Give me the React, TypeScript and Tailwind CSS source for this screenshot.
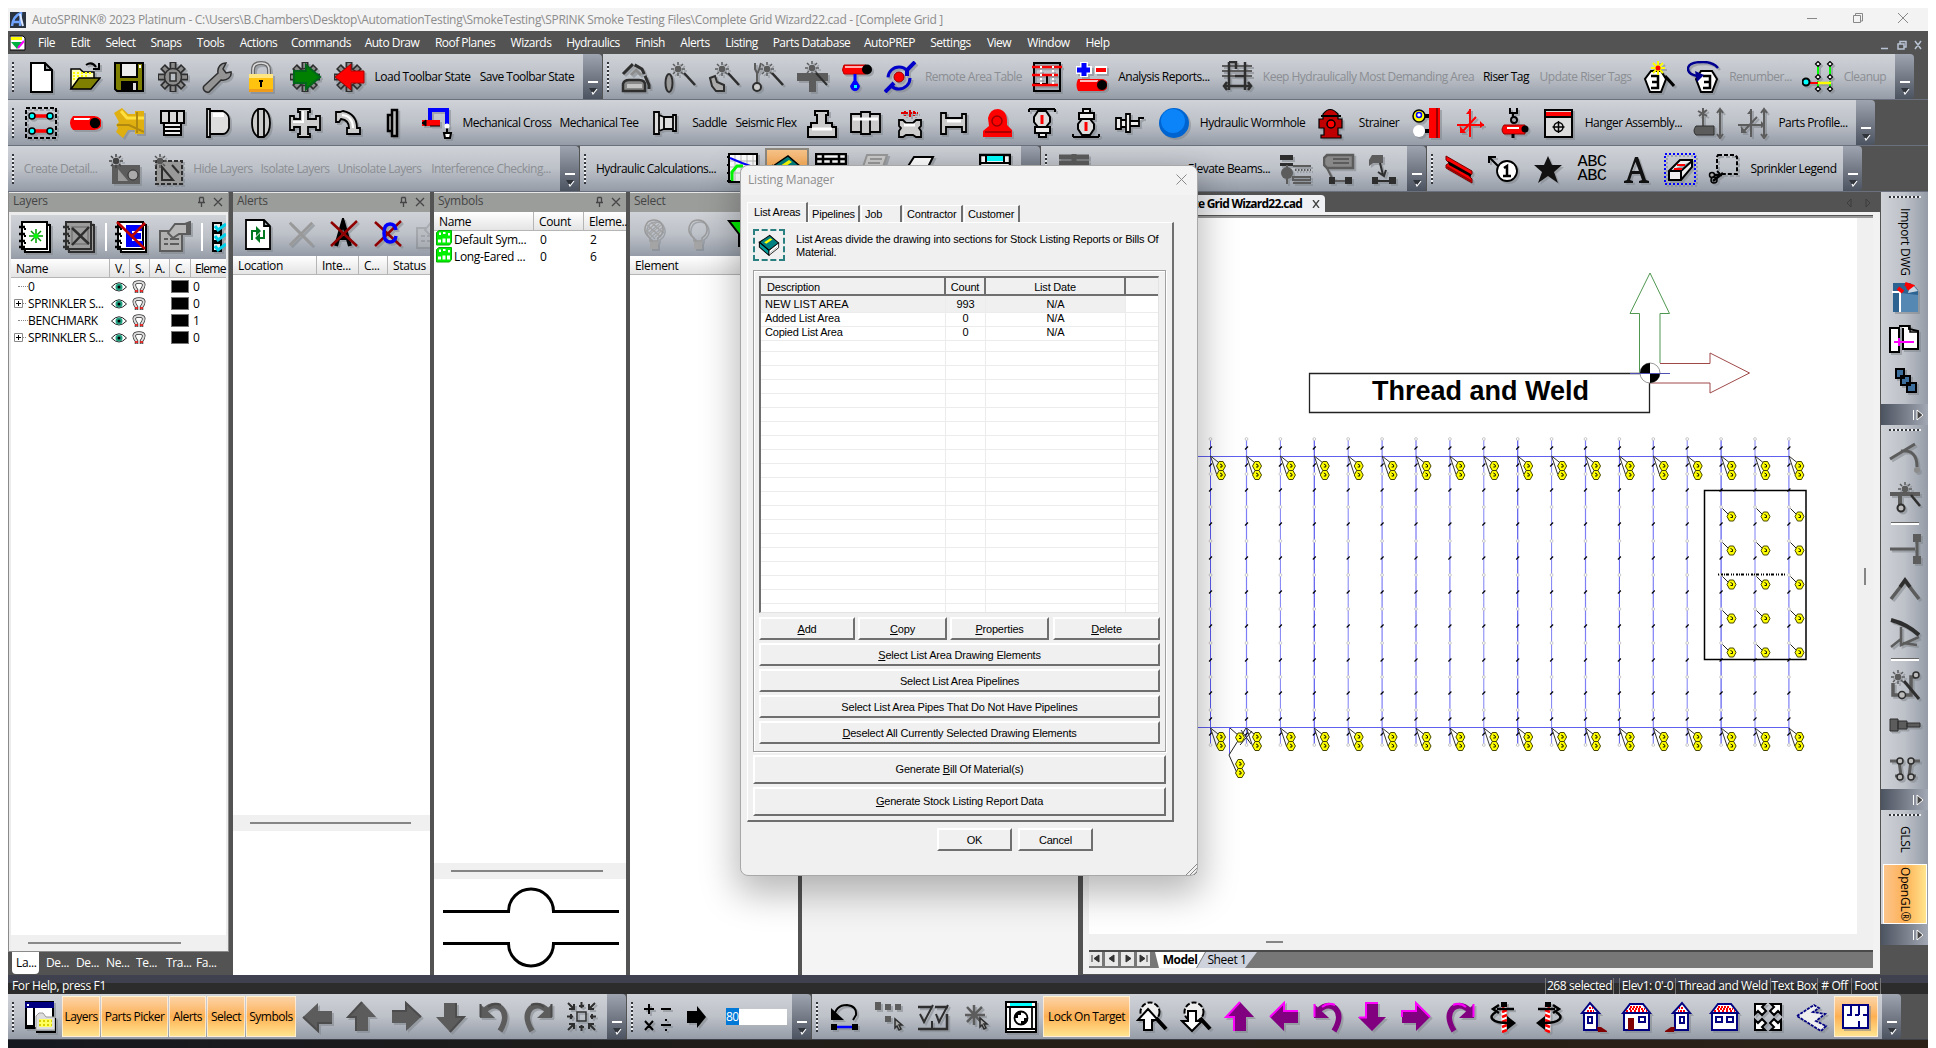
import React from "react";

const K = "#000";
const R = "#ff0000";
const G = "#5c5c5c";
const DG = "#2e2e2e";
const LG = "#8c8c8c";

/* Icon drawings on a 32x32 grid */
const gear = (
  <>
    <g stroke={DG} strokeWidth="7">
      <path d="M16 1v30M1 16h30M5.500 5.500l21 21M26.500 5.500l-21 21" strokeDasharray="none" />
    </g>
    <g stroke={LG} strokeWidth="3.500">
      <path d="M16 2v28M2 16h28M6.500 6.500l19 19M25.500 6.500l-19 19" />
    </g>
    <circle cx="16" cy="16" r="8.500" fill={LG} stroke={DG} strokeWidth="1.500" />
    <path d="M13 12h6v8h-6z" fill="#b9bdc4" stroke={DG} strokeWidth="1.500" />
  </>
);
const sun = (x: number, y: number, c = G) => (
  <g stroke={c} strokeWidth="1.500">
    <circle cx={x} cy={y} r="2.500" fill={c} />
    <path d={`M${x} ${y - 7}v3M${x} ${y + 4}v3M${x - 7} ${y}h3M${x + 4} ${y}h3M${x - 5} ${y - 5}l2 2M${x + 3} ${y + 3}l2 2M${x + 5} ${y - 5}l-2 2M${x - 3} ${y + 3}l-2 2`} />
  </g>
);
const wand = <path d="M20 12l11 12" stroke={DG} strokeWidth="2.500" />;
const arrowUp = (f: string, s: string) => (
  <>
    <path d="M16 1L30 16h-8v14H10V16H2z" fill={f} />
    <path d="M10 30V16H2L16 1" stroke={s} strokeWidth="2" />
  </>
);
const curl = (f: string, s: string) => (
  <>
    <path d="M6 10Q15 1 23 7Q31 15 22 30" stroke={f} strokeWidth="5.500" />
    <path d="M2 3v14h15z" fill={f} />
    <path d="M2.500 3v13M10 6Q16 1 23 4" stroke={s} strokeWidth="2" />
  </>
);
const house = (narrow: boolean, flip: boolean) => (
  <g transform={flip ? "matrix(-1 0 0 1 32 0)" : undefined}>
    {narrow ? (
      <>
        <path d="M8 12h13v17H8z" fill="#fff" stroke="#000080" strokeWidth="2" />
        <path d="M6 12L14 2l9 10z" fill="#fff" stroke="#000080" strokeWidth="2" />
        <path d="M11 10h7M13 7h4" stroke={R} strokeWidth="2" strokeDasharray="2 1" />
        <path d="M12 16h4v6h-4z" stroke="#000080" strokeWidth="2" />
        <path d="M21 26h4l6 4v1h-9z" fill="#800000" />
      </>
    ) : (
      <>
        <path d="M4 12h25v17H4z" fill="#fff" stroke="#000080" strokeWidth="2" />
        <path d="M3 12L10 3h13l7 9z" fill="#fff" stroke="#000080" strokeWidth="2" />
        <path d="M6 10h21" stroke={R} strokeWidth="2" strokeDasharray="2 2" />
        <path d="M9 8h16M10 6h12" stroke={R} strokeWidth="2" strokeDasharray="2 1" />
        <path d="M19 16h6v5h-6z" stroke="#000080" strokeWidth="2" />
      </>
    )}
  </g>
);
const spiral = (
  <>
    <path d="M16 1v30" stroke="#fff" strokeWidth="5" />
    <path d="M14 6l5-2M14 11l5-2M14 16l5-2M14 21l5-2M14 26l5-2M14 31l5-2" stroke={R} strokeWidth="2.500" />
    <path d="M13 1h6v5h-6z" fill={K} />
    <path d="M9 8h17M11 4l-6 4 6 4" stroke={K} strokeWidth="2.500" />
    <path d="M8 11c-9 5-4 11 12 11" stroke={K} strokeWidth="2.500" />
    <path d="M19 15v14l9-7z" fill={K} />
  </>
);
const book = (
  <>
    <path d="M2 12L17 2l13 11-14 11z" fill="#008080" stroke={K} strokeWidth="1.500" />
    <path d="M2 12v7l14 12v-7z" fill="#00a0a0" stroke={K} strokeWidth="1.500" />
    <path d="M16 24l14-11v7L16 31z" fill="#fff" stroke={K} strokeWidth="1.200" />
    <path d="M18 27l10-8" stroke="#999" />
    <path d="M9 12l9-6 3 2-9 6z" fill="#ffff00" />
  </>
);
const notebook = (f: string, s: string) => (
  <>
    <path d="M6 4h25v27H6z" fill={f} stroke={s} strokeWidth="2" />
    <path d="M3 1h25v27H3z" fill={f} stroke={s} strokeWidth="2" />
    <path d="M0 6h6M0 13h6M0 20h6M0 26h6" stroke={s} strokeWidth="2.500" />
    <path d="M5 8h2M5 15h2M5 22h2" stroke={s} strokeWidth="2" />
  </>
);
const propSheet = (
  <>
    <path d="M1 10h22v20H1z" fill="#b0b0b0" stroke={G} strokeWidth="2" />
    <path d="M5 18h4M11 18h9M5 23h4M11 23h9" stroke={G} strokeWidth="2" />
    <path d="M9 12l7-9h10l5-2v12H20l-6 4z" fill="#b8b8b8" stroke={G} strokeWidth="2" />
    <path d="M27 2h4v11h-4z" fill={G} />
  </>
);
const hand = (x: number, y: number, c: string) => (
  <path d={`M${x} ${y}v9l2-2 2 4 2-1-2-4h3z`} fill="#aaa" stroke={c} strokeWidth="1.500" />
);
const zoomArrow = (up: boolean) => (
  <>
    <circle cx="14" cy="11" r="9.500" fill="#eee" stroke={K} strokeWidth="2" strokeDasharray="5 2" />
    <path d="M20 17l10 11" stroke={K} strokeWidth="4" />
    {up ? (
      <path d="M12 8L22 19h-6v10H8V19H2z" fill="#fff" stroke={K} strokeWidth="2" />
    ) : (
      <path d="M12 30L22 20h-6V10H8v10H2z" fill="#fff" stroke={K} strokeWidth="2" />
    )}
  </>
);
const sprinkler = (
  <>
    <path d="M3 2h26M3 2v3M29 2v3" stroke={K} strokeWidth="2" />
    <path d="M12 4h8l4 6v5l-4 5h-8l-4-5v-5z" fill="#ddd" stroke={K} strokeWidth="2" />
    <path d="M16 8v9" stroke={R} strokeWidth="3" />
    <path d="M9 20h15v6H9zM13 26h7v4h-7z" fill="#eee" stroke={K} strokeWidth="2" />
  </>
);
const axes = (c: string) => (
  <>
    <path d="M15 2v28M2 18h27M8 24L21 10" stroke={c} strokeWidth="2" />
    <path d="M11 7l4-5v5zM25 14l4 4-4 3zM5 19v7h6z" fill={c} />
  </>
);

const ICONS: Record<string, React.ReactNode> = {
  newdoc: <path d="M6 2h14l7 7v22H6z M20 2v7h7" fill="#fff" stroke={K} strokeWidth="2" />,
  open: (
    <>
      <path d="M2 28V8h9l3 3h11v6" fill="#ffffc0" stroke={K} strokeWidth="1.500" />
      <path d="M4 12h18M4 15h16M4 18h8" stroke="#ffff00" strokeWidth="2" strokeDasharray="2 2" />
      <path d="M2 28l8-11h21l-9 11z" fill="#808000" stroke={K} strokeWidth="1.500" />
      <path d="M17 4q6-4 10 2M30 2v6h-6" stroke={K} strokeWidth="2" />
    </>
  ),
  save: (
    <>
      <path d="M2 2h28v28H4l-2-2z" fill="#808000" stroke={K} strokeWidth="2" />
      <path d="M8 2h16v14H8z" fill="#eee" stroke={K} strokeWidth="2" />
      <path d="M8 20h17v10H8z" fill={K} />
      <path d="M20 22h3v7h-3z" fill="#ddd" />
      <path d="M26 4h2v3h-2z" fill="#fff" />
    </>
  ),
  gear,
  wrench: (
    <path d="M3 25L17 12c-1-6 3-10 8-10l-3 6 3 4 5-1c1 5-4 9-10 8L8 31c-4 1-7-3-5-6z" fill="#949494" stroke={DG} strokeWidth="1.500" />
  ),
  lock: (
    <>
      <path d="M8 14V9q0-7 8-7t8 7v5" stroke="#666" strokeWidth="4" />
      <path d="M8 14V9q0-7 8-7t8 7v5" stroke="#ddd" strokeWidth="1.500" />
      <path d="M4 13h24v18H4z" fill="#ffc20e" />
      <path d="M4 13h24v4H4z" fill="#ffe680" />
      <path d="M4 28h24v3H4z" fill="#ef9c1c" />
      <path d="M16 19v7M14 20h4" stroke={K} strokeWidth="2" />
    </>
  ),
  gearGreen: (
    <>
      {gear}
      <path d="M5 10h12V4l14 12-14 12v-6H5z" fill="#008000" stroke="#00661a" strokeWidth="2" />
    </>
  ),
  gearRed: (
    <>
      {gear}
      <path d="M31 10H18V3L2 16l16 13v-7h13z" fill={R} stroke="#a00" />
    </>
  ),
  headset: (
    <>
      <path d="M3 13L13 3l9 5 7 16v5" stroke={DG} strokeWidth="3" strokeDasharray="14 2" />
      <path d="M11 14l5-5 5 5" stroke={LG} strokeWidth="3" />
      <path d="M3 30v-7q1-4 6-4h10q6 0 6 5v6z" fill="#888" stroke={DG} strokeWidth="2.500" />
      <path d="M7 25h15" stroke="#c4c4c4" strokeWidth="4" />
    </>
  ),
  wand1: (
    <>
      {sun(14, 8)}
      {wand}
      <ellipse cx="5" cy="22" rx="3.500" ry="9" fill="#999" stroke={DG} strokeWidth="2" />
    </>
  ),
  wand2: (
    <>
      {sun(14, 8)}
      {wand}
      <path d="M2 17l5-2 2 6 7 3v6H8l-4-5z" fill="#aaa" stroke={DG} strokeWidth="2" />
    </>
  ),
  wand3: (
    <>
      {sun(15, 8)}
      {wand}
      <path d="M3 2v6l2 4v10M9 2L6 12" stroke={G} strokeWidth="2" />
      <circle cx="5" cy="26" r="4" fill="#ccc" stroke={DG} strokeWidth="2" />
    </>
  ),
  wand4: (
    <>
      {sun(16, 7)}
      <path d="M1 12h31v8H20v11h-7V20H1z" fill={G} />
      <path d="M20 12l11 12" stroke={DG} strokeWidth="2" />
    </>
  ),
  drip: (
    <>
      <path d="M4 4h22v9H4q-3-4 0-9z" fill={R} stroke="#b00" />
      <path d="M5 6h18" stroke="#ffb0b0" strokeWidth="2" />
      <circle cx="27" cy="8.500" r="5" fill={K} />
      <path d="M15 13v6" stroke="#00f" strokeWidth="3" />
      <path d="M15 17l5 8q-1 5-5 5t-5-5z" fill="#00f" />
      <path d="M14 24h3v3h-3z" fill="#0ff" />
    </>
  ),
  swirl: (
    <>
      <circle cx="15" cy="17" r="11" stroke="#0000c8" strokeWidth="3" strokeDasharray="26 9" />
      <path d="M31 1l-8 8v6M1 31l9-9" stroke="#0000c8" strokeWidth="4" />
      <circle cx="15" cy="16" r="5" fill={R} stroke="#900" />
    </>
  ),
  gridRed: (
    <>
      <path d="M3 2h26v28H3z M3 14h13v9H3z" stroke={K} strokeWidth="2" />
      <path d="M1 6h30M1 14h26M1 24h26" stroke={R} strokeWidth="2.500" />
      <path d="M10 5v19M22 5v19" stroke="#fff" strokeWidth="2" strokeDasharray="2 2" />
    </>
  ),
  plusPipe: (
    <>
      <path d="M1 9h16M9 1v15" stroke="#fff" strokeWidth="8" />
      <path d="M2 9h13M9 2v13" stroke="#00f" strokeWidth="5" />
      <path d="M20 5h12v8H20z" fill="#fff" />
      <path d="M21 7h10v4H21z" fill={R} />
      <path d="M3 18h24v12H3q-3-6 0-12z" fill={R} />
      <path d="M5 20h18" stroke="#ffc0c0" strokeWidth="2" />
      <circle cx="27" cy="24" r="5.500" fill={K} stroke={R} />
    </>
  ),
  truss: (
    <>
      <path d="M1 5h30M1 10h30M1 15h30" stroke={G} strokeWidth="2" />
      <path d="M8 1v28M24 1v28M8 1h7v7M14 15h9M4 25h25M6 21l-3 4 3 4M27 21l3 4-3 4" stroke={DG} strokeWidth="2.500" />
    </>
  ),
  tag3a: (
    <>
      <path d="M8 10h10l5 8-5 13H7L2 18z" fill="#fff" stroke={K} strokeWidth="2" />
      <path d="M8 15h7v12H8M9 21h6" stroke={K} strokeWidth="2.500" />
      <g stroke="#ffff00" strokeWidth="2">
        <path d="M15 0v14M8 7h14M10 2l10 10M20 2L10 12" />
      </g>
      <circle cx="15" cy="7" r="2.500" fill={R} />
      <path d="M22 15l9 10" stroke={K} strokeWidth="3" />
    </>
  ),
  tag3b: (
    <>
      <path d="M14 10h11l5 8-5 13H14l-5-13z" fill="#fff" stroke={K} strokeWidth="2" />
      <path d="M16 15h7v12h-7M17 21h6" stroke={K} strokeWidth="2.500" />
      <path d="M31 7Q26 1 16 1 1 1 1 8q0 5 9 7" stroke="#000090" strokeWidth="2.500" />
      <path d="M8 10l9 4-7 7z" fill="#000090" />
    </>
  ),
  cleanup: (
    <>
      <path d="M16 4v10M28 4v10M16 20v7M28 20v7" stroke="#0f0" strokeWidth="2" />
      <path d="M16 22h13" stroke="#ff0" strokeWidth="2.500" />
      <path d="M6 22h10" stroke={R} strokeWidth="2" />
      <circle cx="4" cy="21" r="3.500" fill="#0ff" stroke={K} strokeWidth="2" />
      {[
        [16, 3],
        [28, 3],
        [16, 16],
        [28, 16],
        [16, 28],
        [28, 28],
      ].map(([x, y]) => (
        <path key={`${x}${y}`} d={`M${x - 2.5} ${y}l2.500-2.500 2.500 2.500-2.500 2.500z`} fill="#fff" stroke={K} strokeWidth="1.200" />
      ))}
    </>
  ),
  pipesDash: (
    <>
      <path d="M1 1h30v30H1z" stroke={K} strokeWidth="2" strokeDasharray="4 2" />
      <path d="M8 9h16M8 24h16" stroke={R} strokeWidth="3.500" />
      {[
        [7, 9],
        [25, 9],
        [7, 24],
        [25, 24],
      ].map(([x, y]) => (
        <circle key={`${x}${y}`} cx={x} cy={y} r="3" fill="#0ff" stroke={K} strokeWidth="1.500" />
      ))}
    </>
  ),
  pipeRed: (
    <>
      <path d="M4 9h22v14H4q-6-7 0-14z" fill={R} />
      <path d="M5 12h17" stroke="#fff" strokeWidth="2" />
      <circle cx="26" cy="16" r="6" fill={K} stroke={R} strokeWidth="1.500" />
    </>
  ),
  fitting: (
    <>
      <path d="M1 6l8-5 6 6h7V4h9v23h-9v-4h-7l-5 8-7-6 2-4-2-3 3-3z" fill="#e0b010" />
      <path d="M8 4l6 7h17" stroke="#ffe040" strokeWidth="3" />
      <path d="M4 18h12l15 7M24 5v21" stroke="#b08a10" strokeWidth="2" />
    </>
  ),
  plug: (
    <>
      <path d="M4 4h23v12H4z M12 4v12M20 4v12" fill="#d8d8d8" stroke={K} strokeWidth="2" />
      <path d="M7 16h17v12H7z M7 20h17M7 24h17" fill="#eee" stroke={K} strokeWidth="2" />
    </>
  ),
  cap: (
    <>
      <path d="M6 2h3v28H6z M9 4h13q6 3 6 8v9q-2 6-6 6H9" fill="#ddd" stroke={K} strokeWidth="1.800" />
      <path d="M12 8h11" stroke="#fff" strokeWidth="4" />
    </>
  ),
  coupling: (
    <>
      <path d="M13 2h6q6 4 6 14t-6 14h-6Q7 26 7 16T13 2z" fill="#ccc" stroke={K} strokeWidth="1.800" />
      <path d="M13 2v28M19 2v28" stroke={K} strokeWidth="1.800" />
    </>
  ),
  cross: (
    <>
      <path d="M9 2h12v3h-2v7h8V9h4v14h-4v-3h-8v7h2v3H9v-3h2v-7H5v3H1V9h4v3h6V5H9z" fill="#ccc" stroke={K} strokeWidth="1.800" />
      <path d="M14 4v11H4" stroke="#fff" strokeWidth="2" />
    </>
  ),
  elbow: (
    <>
      <path d="M3 5h4l3-1q14 3 14 17h3v6H14v-6h2q0-8-8-9l-2 3H3z" fill="#ccc" stroke={K} strokeWidth="1.800" />
      <path d="M9 8q11 1 11 13" stroke="#fff" strokeWidth="2" />
    </>
  ),
  flange: <path d="M15 3h5v26h-5zM15 8h-4v16h4" fill="#bbb" stroke={K} strokeWidth="2.500" />,
  hose: (
    <>
      <path d="M9 15V3h17v14" stroke="#00f" strokeWidth="4" />
      <path d="M1 16h18" stroke={R} strokeWidth="6" />
      <path d="M1 16l4-3v6zM9 19h10" fill={K} stroke={K} />
      <path d="M26 17v8M23 26h7l-1 5h-5z" fill="#fff" stroke={K} strokeWidth="2" />
      <circle cx="26" cy="19" r="2.500" fill="#fff" />
    </>
  ),
  outlet: (
    <>
      <path d="M5 5h5v22H5zM10 8l5 2v12l-5 2zM15 10h9v12h-9zM24 8h3v16h-3z" fill="#ddd" stroke={K} strokeWidth="1.800" />
    </>
  ),
  tee: (
    <>
      <path d="M2 20h3v-4h6V8H9V4h13v4h-2v8h6v4h4v10H2z" fill="#ccc" stroke={K} strokeWidth="2" />
      <path d="M6 22h20" stroke="#fff" strokeWidth="3" />
    </>
  ),
  union: (
    <>
      <path d="M1 7h10v18H1z M11 5h9v22h-9z M20 7h10v18H20z" fill="#ccc" stroke={K} strokeWidth="1.800" />
      <path d="M3 12h25" stroke="#fff" strokeWidth="3" />
    </>
  ),
  valveRed: (
    <>
      <path d="M7 6h17M16 3v8M11 4v5M20 4v5" stroke="#d00" strokeWidth="2" strokeDasharray="3 1" />
      <path d="M5 13h4l3 3h7l3-3h5v6l-2 2 2 3v6h-5l-3-2h-7l-3 2H5v-6l2-3-2-2z" fill="#ccc" stroke={K} strokeWidth="1.800" />
      <path d="M10 18h11" stroke="#fff" strokeWidth="3" />
    </>
  ),
  spool: (
    <>
      <path d="M3 6h5v5h16V7h4v18h-4v-5H8v7H3z" fill="#ccc" stroke={K} strokeWidth="1.800" />
      <path d="M9 14h14" stroke="#fff" strokeWidth="3" />
    </>
  ),
  pump: (
    <>
      <path d="M6 11Q8 2 16 2q10 1 9 16l5 5v7H1v-6l6-5z" fill={R} />
      <circle cx="15" cy="14" r="5" stroke="#900" strokeWidth="1.500" />
      <path d="M3 25h26" stroke="#a00" strokeWidth="2" />
    </>
  ),
  sprinkler,
  sprinklerUp: <g transform="matrix(1 0 0 -1 0 32)">{sprinkler}</g>,
  sidewall: (
    <path d="M2 11h5v11H2zM7 13h5v7H7zM12 7h4v18h-4zM16 14h9v5h-9M25 14V11h5" fill="#eee" stroke={K} strokeWidth="1.800" />
  ),
  sphere: (
    <>
      <circle cx="16" cy="16" r="15" fill="#0064d0" />
      <circle cx="15" cy="14" r="12" fill="#0a84f8" />
    </>
  ),
  hydrant: (
    <>
      <path d="M8 7q7-9 15 0v5h4v9h-4v7h3v3H6v-3h3v-7H4v-9h4z" fill="#c00000" stroke={K} strokeWidth="1.200" />
      <path d="M6 9h20" stroke={K} strokeWidth="2" />
      <circle cx="16" cy="17" r="4" fill={R} stroke={K} strokeWidth="1.500" />
    </>
  ),
  wallBulb: (
    <>
      <path d="M18 1h11v30H18z" fill={R} />
      <path d="M26 1v30" stroke="#900" strokeWidth="2" />
      <circle cx="8" cy="9" r="6" fill="#ff0" stroke={K} strokeWidth="1.500" />
      <circle cx="8" cy="8" r="2.500" fill="#fff" stroke="#00f" strokeWidth="1.500" />
      <circle cx="8" cy="24" r="6" fill="#fff" />
      <path d="M14 9h4M14 24h4" stroke={K} strokeWidth="4" />
    </>
  ),
  axesRed: axes(R),
  axesGray: (
    <>
      {axes(G)}
      <path d="M28 3v26M25 6l3-4 3 4M25 27l3 4 3-4" stroke={G} strokeWidth="2" />
    </>
  ),
  hangerRed: (
    <>
      <path d="M11 1v5h3v5M18 1v5h-3" stroke={K} strokeWidth="2" />
      <circle cx="15" cy="13" r="3" stroke={K} strokeWidth="2" />
      <path d="M5 18h21v9H5q-4-4 0-9z" fill={R} stroke="#900" />
      <path d="M8 21h12" stroke="#fff" strokeWidth="2" />
      <circle cx="26" cy="22" r="3.500" fill={K} />
      <path d="M14 27v4" stroke={K} strokeWidth="3" />
    </>
  ),
  hangerGray: (
    <>
      <path d="M11 1v18M6 4l9 5M15 3l-8 6" stroke={G} strokeWidth="2" />
      <path d="M4 19h18v9H4q-4-4 0-9z" fill={G} stroke={DG} />
      <path d="M28 3v26M25 6l3-4 3 4M25 27l3 4 3-4" stroke={G} strokeWidth="2" />
    </>
  ),
  target: (
    <>
      <path d="M2 3h27v27H2z" fill="#ddd" stroke={K} strokeWidth="2" />
      <path d="M3 5h25v4H3z" fill={R} />
      <path d="M3 10h25" stroke={K} strokeWidth="2" />
      <circle cx="15.500" cy="20" r="4.500" stroke={K} strokeWidth="1.500" />
      <path d="M15.500 14v12M9.500 20h12" stroke={K} strokeWidth="1.500" />
    </>
  ),
  detailA: (
    <>
      <path d="M4 12h28v19H4z" fill={G} />
      <path d="M10 16l10 12H10z" fill="#9a9a9a" />
      <circle cx="25" cy="22" r="5" fill="#aaa" stroke={DG} />
      {sun(8, 8, "#444")}
    </>
  ),
  detailB: (
    <>
      <path d="M4 8h26v23H4z" fill="#999" stroke={DG} strokeWidth="2" strokeDasharray="4 2" />
      <path d="M10 14l11 13H10zM20 12l7 8" stroke={DG} strokeWidth="2" />
      {sun(8, 8, "#555")}
    </>
  ),
  graph: (
    <>
      <path d="M2 1h28v28H2z" fill="#fff" stroke={K} strokeWidth="2" />
      <path d="M8 2v26M14 2v26M20 2v26M26 2v26M3 8h26M3 14h26M3 20h26" stroke="#bbb" />
      <path d="M3 5l12 5 14 5" stroke="#00f" strokeWidth="2" />
      <path d="M5 28v-9l5-6h6" stroke="#0f0" strokeWidth="3" />
      <path d="M0 4h3M0 12h3M0 20h3M0 28h4" stroke={K} strokeWidth="2" />
    </>
  ),
  book,
  table: (
    <path d="M1 1h30v30H1z M1 6h30M1 11h30M1 17h30M8 1v28M16 6v28M24 1v28" fill="#fff" stroke={K} strokeWidth="2.500" />
  ),
  pageGray: <path d="M8 2h20l-4 12H4z M11 6h12M9 10h12" fill="#ccc" stroke="#999" strokeWidth="2" />,
  pageWhite: <path d="M11 4h19l-7 14H2z" fill="#fff" stroke={K} strokeWidth="2" />,
  windowCyan: (
    <>
      <path d="M1 2h30v29H1z" fill="#fff" stroke={K} strokeWidth="2.500" />
      <path d="M8 3h16v5H8z" fill="#0ff" />
      <path d="M1 10h30M7 2v8M25 2v8" stroke={K} strokeWidth="2" />
    </>
  ),
  beam: <path d="M1 4h30M16 1v28M1 10h30" stroke={G} strokeWidth="5" />,
  elev1: (
    <>
      <path d="M1 2h13v5H1z" fill={DG} />
      <path d="M1 10h13v3H1z" fill={DG} />
      <circle cx="8" cy="20" r="6" fill={G} />
      <path d="M8 12v19" stroke={G} strokeWidth="2" />
      <path d="M14 13h18M14 24h18v3H14zM14 30h18" stroke={G} strokeWidth="2" />
      <path d="M16 17h16" stroke={G} strokeWidth="2" strokeDasharray="1.500 1.500" />
    </>
  ),
  elev2: (
    <>
      <path d="M4 2h26v13H4l-3-3V5z" fill="#888" stroke={G} strokeWidth="2.500" />
      <path d="M10 6h16M10 10h16M4 15l6 12M10 28h14" stroke={G} strokeWidth="2" />
      <path d="M6 24h6v7H6zM22 24h7v7h-7z" fill={DG} />
    </>
  ),
  elev3: (
    <>
      <path d="M5 2h11v8H6L2 13V7z" fill={G} />
      <path d="M13 10l3 12M10 28h14M11 19l6 4 2-6" stroke={DG} strokeWidth="2" />
      <path d="M5 24h6v7H5zM22 24h7v7h-7z" fill={DG} />
    </>
  ),
  beamRed: (
    <>
      <path d="M2 3l26 15v3l-3 2 3 3v4L2 15v-3l3-2-3-3z" fill={R} stroke="#700" />
      <path d="M4 8l23 13v3L5 12z" fill={K} />
      <path d="M3 14l24 14" stroke="#900" strokeWidth="2" />
    </>
  ),
  balloon1: (
    <>
      <path d="M2 5l8 8M1 10V4h7" stroke={K} strokeWidth="2" />
      <circle cx="19" cy="18" r="10" fill="#fff" stroke={K} strokeWidth="1.800" />
      <path d="M16 15l3-2v10M15 23h8" stroke={K} strokeWidth="2.500" />
    </>
  ),
  star: <path d="M16 3l4 9h10l-8 7 4 11-10-7-10 7 4-11-8-7h10z" fill="#111" />,
  letterA: (
    <path d="M4 30v-2l3-1L15 4h3l8 23 3 1v2H19v-2l3-1-2-6h-8l-2 6 3 1v2zM12 18h7l-3.500-9z" fill="#111" />
  ),
  eraser: (
    <>
      <path d="M1 1h30v30H1z" stroke="#00f" strokeWidth="2" strokeDasharray="2 2" />
      <path d="M5 18L16 7h12v7L17 27H5z M5 18h12l11-10M17 18v9" fill="#eee" stroke={K} strokeWidth="2" />
      <path d="M13 12h8M10 16h8" stroke={R} strokeWidth="2" />
    </>
  ),
  lasso: (
    <>
      <path d="M10 2h17l2 2v17H12L9 18V4z" stroke={K} strokeWidth="2" strokeDasharray="4 2" />
      <path d="M5 22h9M5 28l10-8" stroke={K} strokeWidth="2.500" />
      <circle cx="4" cy="22" r="2.500" fill="#aaa" stroke={K} strokeWidth="1.500" />
      <circle cx="6" cy="27" r="3" stroke={K} strokeWidth="1.500" />
    </>
  ),
  windowFolder: (
    <>
      <path d="M2 1h27v26H2z" fill="#fff" stroke={K} strokeWidth="2" />
      <path d="M1 1h29v6H1z" fill="#000080" />
      <path d="M3 3h2v2H3z" fill="#fff" />
      <path d="M10 7v20M2 25h8" stroke={K} strokeWidth="2" />
      <path d="M12 29V15l3-3h4l3 4h9v13z" fill="#ddd" stroke="#999" />
      <path d="M15 18h13v8H15z" fill="#ffff60" />
      <path d="M15 20h13M15 24h13" stroke="#d8d000" strokeWidth="2" strokeDasharray="2 2" />
      <path d="M32 17v14H12" stroke={K} strokeWidth="2" />
    </>
  ),
  gLeft: <g transform="rotate(-90 16 16)">{arrowUp(G, "#4c4c4c")}</g>,
  gUp: arrowUp(G, "#4c4c4c"),
  gRight: <g transform="rotate(90 16 16)">{arrowUp(G, "#4c4c4c")}</g>,
  gDown: <g transform="rotate(180 16 16)">{arrowUp(G, "#4c4c4c")}</g>,
  gCcw: curl(G, "#4a4a4a"),
  gCw: <g transform="matrix(-1 0 0 1 32 0)">{curl(G, "#4a4a4a")}</g>,
  collapse: (
    <>
      <path d="M11 11h9v9h-9z" stroke={DG} strokeWidth="1.500" />
      <path d="M2 2l6 6M29 2l-6 6M2 29l6-6M29 29l-6-6M15.500 1v6M15.500 24v6M1 15.500h6M24 15.500h6" stroke={DG} strokeWidth="2" />
      <path d="M8 3v5H3M23 3v5h5M8 28v-5H3M23 28v-5h5M13 5h5M13 26h5M5 13v5M26 13v5" stroke={DG} strokeWidth="2" />
    </>
  ),
  math: (
    <path d="M3 8h10M8 3v10M20 8h10M4 20l8 9M12 20l-8 9M20 24h10M25 18v2M25 28v2" stroke={K} strokeWidth="2" />
  ),
  goRight: <path d="M6 10h10V5l9 11-9 11v-5H6z" fill={K} />,
  undoLine: (
    <>
      <path d="M5 17Q6 4 18 4q10 1 9 10l-3 5" stroke={K} strokeWidth="2" />
      <path d="M2 7v12h13z" fill={K} />
      <path d="M7 26h18" stroke="#00f" strokeWidth="2.500" />
      <path d="M2 23h6v6H2zM23 23h6v6h-6z" fill={K} />
    </>
  ),
  squaresCursor: (
    <>
      <path d="M2 1h6v8H2zM12 3h6v6h-6zM22 3h6v6h-6zM12 15h6v6h-6z" fill={G} />
      {hand(22, 18, DG)}
    </>
  ),
  checks: (
    <>
      <path d="M1 6h14M18 6h13M1 28h29V13" stroke={DG} strokeWidth="2.500" />
      <path d="M3 13l4 8L16 4M19 13l3 8L31 4M15 28v-8" stroke={DG} strokeWidth="2" />
    </>
  ),
  burstCursor: (
    <>
      <path d="M13 4v20M4 14h20M6 6l14 15M21 6L6 21" stroke={G} strokeWidth="2.500" />
      {hand(19, 17, DG)}
    </>
  ),
  targetWin: (
    <>
      <path d="M1 1h30v30H1z" fill="#fff" stroke={K} strokeWidth="2" />
      <path d="M5 2h22v3H5z" fill="#0ff" />
      <path d="M1 6h30M5 6v21M27 6v21M1 28h30" stroke={K} strokeWidth="1.800" />
      <path d="M16 10v7h7a7 7 0 0 1-7 7v-7H9a7 7 0 0 1 7-7z" fill={K} />
      <circle cx="16" cy="17" r="6.500" stroke={K} strokeWidth="1.800" />
      <path d="M13 14h3v3h3v3h-3v-3h-3z" fill="#fff" />
    </>
  ),
  zoomUp: zoomArrow(true),
  zoomDown: zoomArrow(false),
  pUp: arrowUp("#800080", "#ff00ff"),
  pLeft: (
    <>
      <path d="M2 16L16 2v8h14v12H16v8z" fill="#800080" />
      <path d="M2 16L16 2v8h14" stroke="#ff00ff" strokeWidth="2" />
    </>
  ),
  pRight: (
    <>
      <path d="M30 16L16 2v8H2v12h14v8z" fill="#800080" />
      <path d="M30 16L16 2v8H2v6" stroke="#ff00ff" strokeWidth="2" />
    </>
  ),
  pDown: (
    <>
      <path d="M16 30L2 16h8V2h12v14h8z" fill="#800080" />
      <path d="M3 16.500h7V2h12" stroke="#ff00ff" strokeWidth="2" />
    </>
  ),
  pCcw: curl("#800080", "#ff00ff"),
  pCw: <g transform="matrix(-1 0 0 1 32 0)">{curl("#800080", "#ff00ff")}</g>,
  spinL: spiral,
  spinR: <g transform="matrix(-1 0 0 1 32 0)">{spiral}</g>,
  houseR: house(true, false),
  houseFront: (
    <>
      {house(false, false)}
      <path d="M8 17h6v12H8z" fill="#800000" />
    </>
  ),
  houseL: house(true, true),
  houseBack: (
    <>
      {house(false, false)}
      <path d="M8 16h6v5H8z" stroke="#000080" strokeWidth="2" />
    </>
  ),
  expand: (
    <>
      {[0, 90, 180, 270].map((a) => (
        <path key={a} transform={`rotate(${a} 16 16)`} d="M3 3h10l-3 3 4 4-4 4-4-4-3 3z" fill="#fff" stroke={K} strokeWidth="2" />
      ))}
    </>
  ),
  isoPlan: (
    <path d="M1 15L18 4l5 3-6 4 12 2-9 7 10 5-5 5z" fill="#eee" stroke="#000080" strokeWidth="1.800" strokeDasharray="3 1" />
  ),
  plan: (
    <path d="M3 4h25v23H3z M11 4v10h-4M19 4v10M15 14h4M19 20v7M28 14h-5" fill="#fff" stroke="#000080" strokeWidth="2" />
  ),
  layerNew: (
    <>
      {notebook("#fff", K)}
      <path d="M17 8v14M10 15h14M12 10l10 10M22 10L12 20" stroke="#00a000" strokeWidth="1.500" />
      <path d="M15 13h4v4h-4z" fill="#0f0" />
    </>
  ),
  layerDel: (
    <>
      {notebook("#9c9c9c", DG)}
      <path d="M9 6h16v17H9z" stroke="#777" strokeWidth="1.500" />
      <path d="M9 7l17 16M26 6L9 24" stroke={DG} strokeWidth="2.500" />
    </>
  ),
  layerE: (
    <>
      {notebook("#fff", K)}
      <path d="M27 7H14v16h14M14 15h12" stroke="#00f" strokeWidth="6" />
      <path d="M2 1l28 27M30 2L17 15" stroke="#c00000" strokeWidth="2.500" />
    </>
  ),
  propSheet,
  checkList: (
    <>
      {[2, 12, 22].map((y) => (
        <g key={y}>
          <path d={`M2 ${y}h8v8H2z`} fill="#eee" stroke={K} strokeWidth="2" />
          <path d={`M4 ${y + 3}l3 4 8-6`} stroke="#00d0e8" strokeWidth="3" />
        </g>
      ))}
    </>
  ),
  refresh: (
    <>
      <path d="M4 2h18l6 6v23H4z M22 2v6h6" fill="#fff" stroke={K} strokeWidth="1.800" />
      <path d="M10 22v-9h5M22 12v8h-5" stroke="#007820" strokeWidth="2" />
      <path d="M14 8l5 5-5 5zM18 15l-5 5 5 5z" fill="#007820" />
    </>
  ),
  xGray: <path d="M4 4l24 24M28 4L4 28" stroke="#999" strokeWidth="3" />,
  xA: (
    <>
      <path d="M8 28L15 4l7 24M10 20h11" stroke={K} strokeWidth="4" />
      <path d="M3 4l26 24M29 3L3 28" stroke="#900000" strokeWidth="2.500" />
    </>
  ),
  xC: (
    <>
      <path d="M3 4l26 24M29 3L3 28" stroke="#900000" strokeWidth="2.500" />
      <path d="M24 12q-1-6-6-6-6 0-6 9t6 9q5 0 6-6" stroke="#00f" strokeWidth="3.500" />
    </>
  ),
  bulbOn: (
    <>
      <path d="M12 20C3 14 7 2 16 2s13 12 4 18v3h-8z" stroke="#999" strokeWidth="1.500" />
      <path d="M9 7l12 10M13 4l10 9M8 12l7 7M23 7L11 17M19 4L9 13M24 12l-7 7" stroke="#a4a4a4" strokeWidth="1.200" />
      <path d="M12 24h8v7h-8z" fill="#a4a4a4" />
    </>
  ),
  bulbOff: (
    <>
      <path d="M12 20C3 14 7 2 16 2s13 12 4 18v3h-8z" stroke="#999" strokeWidth="1.500" />
      <path d="M12 24h8v7h-8z" fill="#a4a4a4" />
    </>
  ),
  funnel: <path d="M3 3h26L18 16v12h-5V16z" fill="#0e0" stroke={K} strokeWidth="2" />,
  symbols: (
    <>
      <path d="M1 5l5-4h25v24l-4 5H1z" fill="#00f000" stroke="#00b000" strokeWidth="2" />
      <path d="M4 19h6v6H4zM13 17h6v8h-6zM22 17h6v8h-6zM6 5h4v5H6zM14 4h5v4h-5zM24 6h4v5h-4z" fill="#fff" />
    </>
  ),
  dwg: (
    <>
      <path d="M4 2h18l7 7v22H4z" fill="#2d6391" />
      <path d="M12 12l17 2v17H12z" fill="#5688b4" />
      <path d="M22 2l7 8-10 2z" fill="#c9d6e2" />
      <path d="M11 8v23M3 11h10" stroke="#fff" strokeWidth="2" />
      <path d="M9 7l5 4M16 3l6 2-4 3" stroke={R} strokeWidth="4" />
    </>
  ),
  pagesMove: (
    <>
      <path d="M1 5h9v24H1zM10 3h10v3l9 2v18H14V5" fill="#fff" stroke={K} strokeWidth="2" />
      <path d="M21 2v7h8" stroke={K} strokeWidth="1.500" />
      <path d="M5 19h20M10 15v8" stroke="#f0f" strokeWidth="2" />
    </>
  ),
  cubes: (
    <path d="M7 4h8v9H7zM12 11h9v9h-9zM18 18h9v9h-9z" fill="#3b6e9c" stroke={K} strokeWidth="2" />
  ),
  branch: (
    <>
      <path d="M1 18L26 3M12 10q16-2 16 16" stroke={G} strokeWidth="3" />
      <circle cx="28" cy="29" r="3" fill={LG} />
    </>
  ),
  wandPipe: (
    <>
      <path d="M1 13h30M11 13v12" stroke={G} strokeWidth="4" />
      {sun(16, 8)}
      <path d="M22 14l9 11" stroke={DG} strokeWidth="2.500" />
      <circle cx="12" cy="27" r="3.500" fill="#bbb" stroke={DG} strokeWidth="2" />
    </>
  ),
  sideTee: (
    <>
      <path d="M1 16h25M28 2v28" stroke={G} strokeWidth="3" />
      <path d="M24 1h8v8h-8zM24 23h8v8h-8z" fill={G} />
    </>
  ),
  chevron: (
    <>
      <path d="M2 26L16 8l14 18" stroke={G} strokeWidth="3.500" />
      <path d="M11 14l5-7 5 7" stroke={DG} strokeWidth="3.500" />
    </>
  ),
  armA: (
    <>
      <path d="M2 3q16 4 28 15" stroke={DG} strokeWidth="4" />
      <path d="M12 10v18l18-8M14 26l14 2M2 30l10-8" stroke={G} strokeWidth="2.500" />
    </>
  ),
  wandPipe2: (
    <>
      {sun(9, 8)}
      <path d="M4 14v12h18V8h5" stroke={G} strokeWidth="3.500" />
      <path d="M15 12l15 18" stroke={DG} strokeWidth="3" />
      <circle cx="27" cy="6" r="3" fill="#bbb" stroke={DG} strokeWidth="1.500" />
      <circle cx="13" cy="26" r="3.500" fill="#bbb" stroke={DG} strokeWidth="1.500" />
    </>
  ),
  nozzle: <path d="M1 10h8v12H1zM9 12h9v8H9zM18 14h13v4H18z" fill={G} stroke={DG} />,
  nodes4: (
    <>
      <path d="M1 8h10M21 8h10M10 8l2 15M22 8l-2 15M11 23H6M21 23h6" stroke={G} strokeWidth="3" />
      {[
        [11, 8],
        [22, 8],
        [11, 24],
        [22, 24],
      ].map(([x, y]) => (
        <circle key={`${x}${y}`} cx={x} cy={y} r="3" fill="#bbb" stroke={DG} strokeWidth="1.500" />
      ))}
    </>
  ),
};

function Icon({ n, className = "size-8" }: { n: string; className?: string }) {
  return (
    <svg viewBox="0 0 32 32" fill="none" className={`shrink-0 drop-shadow-[2px_2px_0_rgba(130,134,140,0.55)] ${className}`}>
      {ICONS[n]}
    </svg>
  );
}

function Slot({ n, on }: { n: string; on?: boolean }) {
  return (
    <div className={`flex h-[41px] w-11 shrink-0 items-center justify-center ${on ? "border-x-2 border-t-2 border-[#8f8a80] bg-linear-to-b from-[#fbc58b] via-[#fdab4a] to-[#ffe48f]" : ""}`}>
      <Icon n={n} />
    </div>
  );
}
const slots = (names: string) => names.split(" ").map((n, i) => <Slot key={i} n={n} />);

function Label({ w, off, children }: { w: string; off?: boolean; children: React.ReactNode }) {
  return (
    <div className={`shrink-0 whitespace-nowrap text-center ${w} ${off ? "text-[#8b8e93]" : "text-black"}`}>{children}</div>
  );
}

function Grip() {
  return <div className="ml-1 mr-[5px] h-[30px] w-0.5 shrink-0 bg-[repeating-linear-gradient(#33373d_0_2px,#eef0f2_2px_4px)]" />;
}

function Bar({ w, children }: { w: string; children: React.ReactNode }) {
  return (
    <div className={`flex h-[45px] shrink-0 overflow-hidden rounded-r tracking-[-0.52px] ${w}`}>
      <div className="flex min-w-0 flex-1 items-center overflow-hidden bg-linear-to-b from-[#cfd2d7] via-[#bdc1c8] to-[#959ca7]">
        <Grip />
        {children}
      </div>
      <div className="flex w-[19px] shrink-0 flex-col items-center justify-end bg-linear-to-b from-[#9fa5b0] to-[#4d5461] pb-1">
        <div className="mb-1 h-0.5 w-2.5 bg-white" />
        <svg viewBox="0 0 10 8" className="h-2 w-2.5">
          <path d="M1 1h8L5 7z" fill="#30343b" />
          <path d="M9 2L5 7 4 5" fill="none" stroke="#fff" strokeWidth="1.200" />
        </svg>
      </div>
    </div>
  );
}

function Caption({ children, closable = true }: { children: React.ReactNode; closable?: boolean }) {
  return (
    <div className="flex h-5 shrink-0 items-start border-t border-[#e8e8e8] bg-[#9b9d9b] pl-1 pr-[5px] text-[#454545]">
      <span className="flex-1 tracking-[-0.25px]">{children}</span>
      {closable && (
        <svg viewBox="0 0 26 12" fill="none" stroke="#454545" strokeWidth="1.300" className="mt-[3px] h-3 w-[26px]">
          <path d="M2.500 1.500v5M6.500 1.500v5M1 6.500h7M2.500 1.500h4M4.500 7v4M17 2l8 8M25 2l-8 8" />
        </svg>
      )}
    </div>
  );
}

const HEAD = "flex h-[19px] shrink-0 border-b border-[#b5b5b5] bg-linear-to-b from-white to-[#e4e4e4] leading-5 text-black";
const TOOLS = "flex shrink-0 items-center overflow-hidden bg-linear-to-b from-[#cfd2d7] via-[#bdc1c8] to-[#959ca7]";

function Col({ w, last, children }: { w: string; last?: boolean; children: React.ReactNode }) {
  return (
    <div className={`shrink-0 whitespace-nowrap pl-[5px] ${last ? "" : "border-r border-[#b5b5b5]"} ${w}`}>{children}</div>
  );
}

const LAYERS = [
  { name: "0", count: "0", tree: false },
  { name: "SPRINKLER S...", count: "0", tree: true },
  { name: "BENCHMARK", count: "1", tree: false },
  { name: "SPRINKLER S...", count: "0", tree: true },
];

function LayersPanel() {
  return (
    <div className="flex w-[222px] shrink-0 flex-col">
      <div className="flex h-[760px] w-[221px] flex-col border-x border-b border-[#8a8a8a] bg-[#ececec]">
        <Caption>Layers</Caption>
        <div className="flex min-h-0 flex-1 flex-col px-0.5 pt-[3px]">
          <div className={`${TOOLS} h-11 pl-2`}>
            <Icon n="layerNew" />
            <Icon n="layerDel" className="ml-3 size-8" />
            <div className="ml-2.5 h-7 w-0.5 shrink-0 bg-white" />
            <Icon n="layerE" className="ml-2 size-8" />
            <Icon n="propSheet" className="ml-3 size-8" />
            <div className="ml-2.5 h-7 w-0.5 shrink-0 bg-white" />
            <Icon n="checkList" className="ml-2 size-8" />
          </div>
          <div className={HEAD}>
            <Col w="w-[99px]">Name</Col>
            <Col w="w-5">V.</Col>
            <Col w="w-5">S.</Col>
            <Col w="w-5">A.</Col>
            <Col w="w-[21px]">C.</Col>
            <div className="w-9 shrink-0 pl-1 tracking-[-0.7px]">Eleme</div>
          </div>
          <div className="min-h-0 flex-1 bg-white">
            {LAYERS.map((l, i) => (
              <div key={i} className="flex h-[17px] items-center whitespace-nowrap text-black">
                <div className="flex w-[17px] items-center justify-end">
                  {l.tree ? (
                    <svg viewBox="0 0 14 9" fill="none" className="h-[9px] w-3.5 bg-white">
                      <path d="M.5.500h8v8h-8z" stroke="#8a8a8a" />
                      <path d="M2 4.500h5M4.500 2v5" stroke="#000" />
                      <path d="M9 4.500h4" stroke="#888" strokeDasharray="1 1" />
                    </svg>
                  ) : (
                    <div className="h-px w-2.5 border-t border-dotted border-[#888]" />
                  )}
                </div>
                <div className="w-[83px]">{l.name}</div>
                <svg viewBox="0 0 16 10" className="h-2.5 w-4">
                  <path d="M.5 5Q8-3.500 15.500 5 8 13 .5 5z" fill="#fff" stroke="#222" />
                  <circle cx="8" cy="5" r="3.500" fill="#20a080" />
                  <circle cx="8" cy="5" r="1.500" fill="#000" />
                </svg>
                <svg viewBox="0 0 14 14" fill="none" className="ml-[5px] size-3.5">
                  <path d="M4.500 13V10Q-1 2 7 2t2.500 8v3" stroke="#333" strokeWidth="3.500" />
                  <path d="M4.500 12.500V10Q-1 2 7 2t2.500 8v2.500" stroke="#ddd" strokeWidth="2" />
                  <path d="M3 11h3M8 11h3" stroke="#e00" strokeWidth="1.500" />
                </svg>
                <div className="ml-[25px] h-[13px] w-[18px] border border-[#777] bg-black" />
                <div className="pl-1">{l.count}</div>
              </div>
            ))}
          </div>
          <div className="flex h-4 items-center bg-[#f0f0f0] pl-[17px]">
            <div className="h-0.5 w-[153px] bg-[#8a8a8a]" />
          </div>
        </div>
      </div>
      <div className="flex h-[23px] items-start pl-1 text-white">
        <div className="h-[22px] w-[27px] rounded-b bg-white pl-1 leading-[22px] text-black">La...</div>
        <div className="flex pl-[7px] leading-[22px]">
          <span className="w-[30px]">De...</span>
          <span className="w-[30px]">De...</span>
          <span className="w-[30px]">Ne...</span>
          <span className="w-[30px]">Te...</span>
          <span className="w-[30px]">Tra...</span>
          <span className="w-[30px]">Fa...</span>
        </div>
      </div>
    </div>
  );
}

function Thumb({ w, ml }: { w: string; ml: string }) {
  return (
    <div className="flex h-4 shrink-0 items-center bg-[#f0f0f0]">
      <div className={`h-0.5 bg-[#858585] ${w} ${ml}`} />
    </div>
  );
}

function AlertsPanel() {
  return (
    <div className="ml-[3px] flex w-[197px] shrink-0 flex-col bg-white">
      <Caption>Alerts</Caption>
      <div className={`${TOOLS} h-11 gap-3 pl-[9px]`}>
        <Icon n="refresh" />
        <Icon n="xGray" className="size-[30px]" />
        <Icon n="xA" />
        <Icon n="xC" />
        <Icon n="propSheet" className="size-8 opacity-25" />
      </div>
      <div className={HEAD}>
        <Col w="w-[84px]">Location</Col>
        <Col w="w-[42px]">Inte...</Col>
        <Col w="w-[29px]">C...</Col>
        <Col w="w-[42px]" last>Status</Col>
      </div>
      <div className="h-[540px]" />
      <Thumb w="w-[161px]" ml="ml-[17px]" />
    </div>
  );
}

function SymbolsPanel() {
  return (
    <div className="ml-1 flex w-[192px] shrink-0 flex-col bg-white text-black">
      <Caption>Symbols</Caption>
      <div className={HEAD}>
        <Col w="w-[100px]">Name</Col>
        <Col w="w-[50px]">Count</Col>
        <Col w="w-[42px]" last>Eleme..</Col>
      </div>
      {[
        ["Default Sym...", "2"],
        ["Long-Eared ...", "6"],
      ].map(([a, b]) => (
        <div key={a} className="flex h-[17px] items-center whitespace-nowrap pl-0.5">
          <svg viewBox="0 0 32 32" fill="none" className="-mt-1 size-4">
            {ICONS.symbols}
          </svg>
          <span className="w-[88px] pl-0.5">{a}</span>
          <span className="w-[50px]">0</span>
          <span>{b}</span>
        </div>
      ))}
      <div className="h-[598px]" />
      <Thumb w="w-[152px]" ml="ml-[17px]" />
      <svg viewBox="434 879 192 96" fill="none" stroke="#000" strokeWidth="3" className="h-24 w-[192px]">
        <path d="M443 911.500h65.500a22.500 22.500 0 0 1 45 0H619M443 943.500h65.500a22.500 22.500 0 0 0 45 0H619" />
      </svg>
    </div>
  );
}

function SelectPanel() {
  return (
    <div className="ml-1 flex w-[168px] shrink-0 flex-col bg-white">
      <Caption closable={false}>Select</Caption>
      <div className={`${TOOLS} h-11 gap-3 pl-2`}>
        <Icon n="bulbOn" />
        <Icon n="bulbOff" />
        <Icon n="funnel" />
      </div>
      <div className={HEAD}>
        <Col w="w-[160px]" last>Element</Col>
      </div>
    </div>
  );
}

const PIPES = [1210.5, ...Array.from({ length: 17 }, (_, i) => 1246.5 + i * 33.9)];
const HEADS = [439, 474, 507, 541, 575, 609, 643, 677, 710, 745];
const TICKS = [448, 465, 490, 524, 558, 592, 626, 660, 693, 719, 734];

function Hex({ x, y }: { x: number; y: number }) {
  return (
    <g>
      <path d={`M${x - 2} ${y - 4.5}h4l2.500 4.500-2.500 4.500h-4l-2.500-4.500z`} fill="#ffff00" stroke="#444400" />
      <path d={`M${x - 1} ${y - 2}l2 1v2h-2`} stroke="#000" strokeWidth=".9" />
    </g>
  );
}

function Drawing() {
  return (
    <svg viewBox="1089 218 768 716" fill="none" className="h-[716px] w-[768px] bg-white">
      <path d="M1639.500 373V313.500H1630L1650 273l19.500 40.500h-9.500V363" stroke="#4f974f" />
      <path d="M1660 363.500h50V353l39.500 20-39.500 20v-10h-60" stroke="#a04848" />
      <path d="M1309.500 373.500h340v39h-340z" stroke="#222" strokeWidth="1.300" />
      <circle cx="1650" cy="373" r="10" fill="#fff" stroke="#999" />
      <path d="M1650 373v-10a10 10 0 0 0-10 10zM1650 373v10a10 10 0 0 0 10-10z" fill="#000" />
      <path d="M1630 373.500h40" stroke="#5050b0" />
      <text x="1372" y="399.500" textLength="217" lengthAdjust="spacingAndGlyphs" fill="#000" className="font-['Liberation_Sans',sans-serif] text-[27px] font-bold tracking-normal">
        Thread and Weld
      </text>
      <path d="M1089 456.500h700.500M1089 727.500h700.500M1229.500 728v26" stroke="#5f5ff0" />
      {PIPES.map((x, i) => (
        <g key={x}>
          <path d={`M${x} 438V745`} stroke={i % 3 ? "#7f7ff5" : "#5a5af0"} strokeWidth={i % 2 ? 1.2 : 1} />
          {HEADS.map((y) => (
            <circle key={y} cx={x} cy={y} r="1.400" fill="#fff" stroke="#b4b4b4" strokeWidth=".7" />
          ))}
          {TICKS.map((y) => (
            <path key={y} d={`M${x - 1.5} ${y + 1.5}l3-3`} stroke="#000" strokeWidth="1.100" />
          ))}
          <path d={`M${x} 456l10 8M${x} 456l6 18M${x} 728l10 8M${x} 728l6 18`} stroke="#333" />
          <Hex x={x + 10.5} y={466} />
          <Hex x={x + 10.5} y={475} />
          <Hex x={x + 10.5} y={737} />
          <Hex x={x + 10.5} y={746} />
        </g>
      ))}
      <path d="M1230 728l9 8M1246 728l-17 27 8 18M1240 745l12-14M1241 730l10 14" stroke="#222" />
      <Hex x={1240} y={737.500} />
      <Hex x={1240} y={764} />
      <Hex x={1240} y={773} />
      <path d="M1704.500 490.500H1806v169h-101.500z" stroke="#000" strokeWidth="1.500" />
      <path d="M1718 574.500h67" stroke="#000" strokeWidth="1.800" strokeDasharray="1 2 2 1 1 1 3 2 1 1" />
      {[1731.5, 1765.5, 1799.5].map((x) =>
        [516.5, 550.5, 584.5, 618.5, 652.5].map((y) => (
          <g key={`${x}-${y}`}>
            <path d={`M${x - 9} ${y - 8}l6 6`} stroke="#222" />
            <Hex x={x} y={y} />
          </g>
        ))
      )}
    </svg>
  );
}

function DocumentArea() {
  return (
    <div className="ml-[5px] flex w-[797px] shrink-0 flex-col">
      <div className="flex h-5 items-end">
        <div className="flex h-[17px] w-[242px] items-center justify-end rounded-t bg-[#eef0f3] pr-[5px] font-bold tracking-[-0.75px] text-black">
          <span className="whitespace-nowrap">Complete Grid Wizard22.cad</span>
          <svg viewBox="0 0 8 8" stroke="#444" strokeWidth="1.300" className="ml-2.5 size-2">
            <path d="M1 0l6 8M7 0L1 8" />
          </svg>
        </div>
        <svg viewBox="0 0 26 10" fill="none" stroke="#3d3d3d" className="mb-1 ml-auto mr-2 h-2.5 w-[26px]">
          <path d="M5 1L1 5l4 4zM20 1l4 4-4 4z" />
        </svg>
      </div>
      <div className="flex h-[762px] flex-col border-b-[6px] border-l-[6px] border-r-[7px] border-t-[3px] border-[#f2f2f2]">
        <div className="h-[3px] shrink-0 border-t border-[#555] bg-[#9a9a9a]" />
        <div className="flex">
          <Drawing />
          <div className="flex w-4 justify-center bg-[#f0f0f0]">
            <div className="mt-[350px] h-[17px] w-0.5 bg-[#858585]" />
          </div>
        </div>
        <Thumb w="w-[17px]" ml="ml-[177px]" />
        <div className="flex h-[18px] items-start border-t-2 border-[#4a4a4a] bg-[#777]">
          {["M3 3v7M10 3L5 6.500l5 3.500z", "M9 3L4 6.500 9 10z", "M5 3l5 3.500L5 10z", "M3 3l5 3.500L3 10zM10 3v7"].map((d) => (
            <svg key={d} viewBox="0 0 13 14" fill="#333" stroke="#333" className="mr-[3px] h-3.5 w-[13px] bg-[#e8e8e8]">
              <path d={d} />
            </svg>
          ))}
          <div className="ml-0.5 flex h-4 w-[50px] items-center justify-center bg-white font-bold tracking-[-0.5px] text-black [clip-path:polygon(0_0,100%_0,82%_100%,4px_100%)]">
            Model
          </div>
          <div className="-ml-2 flex h-4 w-[60px] items-center justify-center bg-[#cdd2dd] text-black [clip-path:polygon(15%_0,100%_0,80%_100%,0_100%)]">
            Sheet 1
          </div>
        </div>
      </div>
    </div>
  );
}

function SideEnd() {
  return (
    <div className="flex h-[21px] shrink-0 items-center justify-end bg-linear-to-r from-[#4d5461] to-[#a3a9b4] pr-1">
      <svg viewBox="0 0 12 12" fill="#444" stroke="#fff" className="size-3">
        <path d="M1.500 1v10M5 1l6 5-6 5z" />
      </svg>
    </div>
  );
}
const SideGrip = () => (
  <div className="mx-auto my-1 h-0.5 w-8 shrink-0 bg-[repeating-linear-gradient(90deg,#33373d_0_2px,#eef0f2_2px_4px)]" />
);
const SideSep = () => <div className="mx-auto h-[3px] w-7 shrink-0 border-b-2 border-t border-b-white border-t-[#666]" />;
const SIDE = "flex flex-col items-center overflow-hidden bg-linear-to-r from-[#cfd2d7] via-[#bdc1c8] to-[#959ca7]";
const VTEXT = "[writing-mode:vertical-rl] [text-orientation:sideways] whitespace-nowrap text-black";

function SideToolbars() {
  return (
    <div className="ml-px flex w-[47px] shrink-0 flex-col">
      <div className={`${SIDE} h-[212px]`}>
        <SideGrip />
        <div className={`${VTEXT} mt-1.5 h-[67px] tracking-[-0.2px]`}>Import DWG</div>
        <Icon n="dwg" className="mt-1.5 size-8" />
        <Icon n="pagesMove" className="mt-2.5 size-8" />
        <Icon n="cubes" className="mt-2.5 size-8" />
      </div>
      <SideEnd />
      <div className={`${SIDE} h-[364px] `}>
        <SideGrip />
        <Icon n="branch" className="mt-1.5 size-8" />
        <Icon n="wandPipe" className="mt-2 size-8" />
        <div className="h-[9px] shrink-0" />
        <SideSep />
        <Icon n="sideTee" className="mt-2 size-8" />
        <Icon n="chevron" className="mt-2 size-8" />
        <Icon n="armA" className="mt-3 size-8" />
        <div className="h-[9px] shrink-0" />
        <SideSep />
        <Icon n="wandPipe2" className="mt-2 size-8" />
        <Icon n="nozzle" className="mt-2 size-8" />
        <Icon n="nodes4" className="mt-3 size-8" />
      </div>
      <SideEnd />
      <div className={`${SIDE} h-[114px]`}>
        <SideGrip />
        <div className={`${VTEXT} mt-1.5 h-[39px]`}>GLSL</div>
        <div className="flex h-[62px] w-11 items-center justify-center border border-white bg-linear-to-r from-[#fbc58b] via-[#fdb052] to-[#ffe48f]">
          <span className={`${VTEXT} tracking-[-0.2px]`}>OpenGL®</span>
        </div>
      </div>
      <SideEnd />
    </div>
  );
}

function Btn({ className = "", children }: { className?: string; children: React.ReactNode }) {
  return (
    <div className={`flex shrink-0 items-center justify-center whitespace-nowrap border-2 border-b-[#6f6f6f] border-l-white border-r-[#6f6f6f] border-t-white bg-[#f0f0f0] ${className}`}>
      <span>{children}</span>
    </div>
  );
}
const U = ({ children }: { children: string }) => <span className="underline underline-offset-1">{children}</span>;

function DialogTab({ w, children }: { w: string; children: string }) {
  return (
    <div className={`h-[17px] border-l border-r-2 border-t border-l-white border-r-[#6f6f6f] border-t-white pl-[3px] leading-[17px] ${w}`}>{children}</div>
  );
}

const GRID = "grid grid-cols-[185px_40px_140px_1fr]";
const AREAS = [
  ["NEW LIST AREA", "993"],
  ["Added List Area", "0"],
  ["Copied List Area", "0"],
];

function ListingDialog() {
  return (
    <div className="absolute left-[740px] top-[165px] flex h-[711px] w-[458px] flex-col rounded-lg border border-[#a8a8a8] bg-[#f0f0f0] font-['Liberation_Sans',sans-serif] text-[11px] tracking-[-0.19px] text-black shadow-[0_14px_36px_4px_rgba(0,0,0,0.28)]">
      <div className="flex h-[29px] shrink-0 items-center justify-between rounded-t-lg bg-[#f3f3f3] pb-0.5 pl-[7px] pr-2.5 font-['Open_Sans',sans-serif] text-[12px] text-[#8f8f8f]">
        <span>Listing Manager</span>
        <svg viewBox="0 0 11 11" stroke="#8a8a8a" className="size-[11px]">
          <path d="M.5.500l10 10M10.500.500l-10 10" />
        </svg>
      </div>
      <div className="mt-2 flex h-[19px] shrink-0 items-end pl-1.5">
        <div className="h-5 w-[61px] border-l border-r-2 border-t border-l-white border-r-[#6f6f6f] border-t-white pl-1.5 leading-[18px]">List Areas</div>
        <div className="flex gap-px">
          <DialogTab w="w-[52px]">Pipelines</DialogTab>
          <DialogTab w="w-[41px]">Job</DialogTab>
          <DialogTab w="w-[60px]">Contractor</DialogTab>
          <DialogTab w="w-[56px]">Customer</DialogTab>
        </div>
      </div>
      <div className="ml-1.5 flex h-[600px] w-[427px] shrink-0 flex-col border-b-2 border-l border-r-2 border-t border-b-[#6f6f6f] border-l-white border-r-[#6f6f6f] border-t-white pl-[5px] pt-1.5">
        <div className="flex h-[41px] shrink-0">
          <div className="flex size-8 items-center justify-center border-2 border-dashed border-[#2a8080]">
            <svg viewBox="0 0 32 32" fill="none" className="size-[22px]">
              {ICONS.book}
            </svg>
          </div>
          <div className="whitespace-nowrap pl-[11px] pt-1 leading-[13px]">
            List Areas divide the drawing into sections for Stock Listing Reports or Bills Of
            <br />
            Material.
          </div>
        </div>
        <div className="flex h-[482px] w-[413px] shrink-0 flex-col border border-[#a0a0a0] px-[5px] pt-[5px] shadow-[1px_1px_0_#fff,inset_1px_1px_0_#fff]">
          <div className="flex h-[337px] w-[400px] shrink-0 flex-col overflow-hidden border-b border-l-2 border-r border-t-2 border-b-[#e3e3e3] border-l-[#6f6f6f] border-r-[#e3e3e3] border-t-[#6f6f6f] bg-white">
            <div className={`${GRID} h-[18px] shrink-0 border-b-2 border-[#6f6f6f] bg-[#f0f0f0] text-center leading-[18px]`}>
              <div className="border-r-2 border-[#6f6f6f] pl-1.5 text-left">Description</div>
              <div className="border-r-2 border-[#6f6f6f]">Count</div>
              <div className="border-r-2 border-[#6f6f6f]">List Date</div>
              <div />
            </div>
            {Array.from({ length: 23 }, (_, i) => (
              <div key={i} className={`${GRID} h-3.5 shrink-0 text-center leading-4 ${i === 0 ? "tracking-[-0.05px]" : ""}`}>
                <div className={`border-b border-r border-[#ececec] pl-1 text-left ${i === 0 ? "bg-[#f0f0f0]" : ""}`}>{AREAS[i]?.[0]}</div>
                <div className={`border-b border-r border-[#ececec] ${i === 0 ? "bg-[#f0f0f0]" : ""}`}>{AREAS[i]?.[1]}</div>
                <div className={`border-b border-r border-[#ececec] ${i === 0 ? "bg-[#f0f0f0]" : ""}`}>{AREAS[i] ? "N/A" : ""}</div>
                <div className="border-b border-[#ececec]" />
              </div>
            ))}
          </div>
          <div className="mt-1 flex h-[23px] shrink-0 gap-[3px]">
            <Btn className="w-24"><U>A</U>dd</Btn>
            <Btn className="w-[89px]"><U>C</U>opy</Btn>
            <Btn className="w-[99px]"><U>P</U>roperties</Btn>
            <Btn className="ml-px w-[107px]"><U>D</U>elete</Btn>
          </div>
          <Btn className="mt-[3px] h-[23px] w-[401px]"><U>S</U>elect List Area Drawing Elements</Btn>
          <Btn className="mt-[3px] h-[23px] w-[401px]">Select List Area Pipelines</Btn>
          <Btn className="mt-[3px] h-[23px] w-[401px]">Select List Area Pipes That Do Not Have Pipelines</Btn>
          <Btn className="mt-[3px] h-[23px] w-[401px]"><U>D</U>eselect All Currently Selected Drawing Elements</Btn>
        </div>
        <Btn className="mt-[3px] h-[29px] w-[413px] pb-0.5">Generate <U>B</U>ill Of Material(s)</Btn>
        <Btn className="mt-[3px] h-[29px] w-[413px] pb-0.5"><U>G</U>enerate Stock Listing Report Data</Btn>
      </div>
      <div className="mt-1.5 flex gap-1.5 pl-[196px]">
        <Btn className="h-[23px] w-[75px]">OK</Btn>
        <Btn className="h-[23px] w-[75px]">Cancel</Btn>
      </div>
      <svg viewBox="0 0 12 12" stroke="#888" fill="none" className="absolute bottom-0 right-0 size-3">
        <path d="M1 12L12 1M5 12l7-7M9 12l3-3" />
      </svg>
    </div>
  );
}

const MENU: [string, string][] = [
  ["File", "w-[33px]"], ["Edit", "w-[35px]"], ["Select", "w-[45px]"], ["Snaps", "w-[46px]"], ["Tools", "w-[43px]"],
  ["Actions", "w-[53px]"], ["Commands", "w-[72px]"], ["Auto Draw", "w-[70px]"], ["Roof Planes", "w-[76px]"], ["Wizards", "w-[56px]"],
  ["Hydraulics", "w-[68px]"], ["Finish", "w-[46px]"], ["Alerts", "w-[44px]"], ["Listing", "w-[49px]"], ["Parts Database", "w-[91px]"],
  ["AutoPREP", "w-[65px]"], ["Settings", "w-[57px]"], ["View", "w-[40px]"], ["Window", "w-[59px]"], ["Help", "w-[39px]"],
];

const LIT = "flex h-[41px] shrink-0 items-center justify-center whitespace-nowrap border border-white/60 bg-linear-to-b from-[#fbd3a5] via-[#fdb052] to-[#ffe48f] text-black";
const SEP = "w-px self-stretch bg-[#777]";

export default function App() {
  return (
    <div className="relative h-[1048px] w-[1936px] overflow-hidden bg-white pl-2 pt-2 font-['Open_Sans',sans-serif] text-[12px] leading-4 tracking-[-0.35px]">
      <div className="flex w-[1920px] flex-col bg-[#535353]">
        <div className="flex h-[23px] shrink-0 items-center bg-[#f3f3f3] pl-0.5 pr-5 text-[#8c8c8c]">
          <svg viewBox="0 0 16 16" className="size-4">
            <path d="M0 0h16v16H0z" fill="#2a3340" />
            <path d="M2 14Q3 4 11 1l-1 13M4 10h8" stroke="#6fa4ff" strokeWidth="2.500" fill="none" />
            <path d="M10 2l3 12" stroke="#dce8ff" strokeWidth="2" />
          </svg>
          <span className="flex-1 whitespace-nowrap pl-1.5 tracking-[-0.3px]">
            AutoSPRINK® 2023 Platinum - C:\Users\B.Chambers\Desktop\AutomationTesting\SmokeTesting\SPRINK Smoke Testing Files\Complete Grid Wizard22.cad - [Complete Grid ]
          </span>
          <svg viewBox="0 0 101 12" fill="none" stroke="#888" className="mb-1 h-3 w-[101px]">
            <path d="M0 6.500h10M46.500 3.500h7v7h-7zM48.500 3V1.500h7V9H54M91 1l10 10M101 1L91 11" />
          </svg>
        </div>
        <div className="flex h-[23px] shrink-0 items-center pl-0.5 pr-1.5 tracking-[-0.5px] text-white">
          <svg viewBox="0 0 16 16" className="mr-1 size-4 shrink-0">
            <path d="M0 1h13l2 2v12H0z" fill="#fff" stroke="#000" />
            <path d="M1 2h11v3H1z" fill="#ff0" />
            <path d="M1 7h12L7 14z" fill="#00b040" />
            <path d="M8 13l6-7" stroke="#f0f" strokeWidth="2" />
          </svg>
          {MENU.map(([m, w]) => (
            <span key={m} className={`shrink-0 text-center ${w}`}>{m}</span>
          ))}
          <svg viewBox="0 0 42 10" fill="none" stroke="#b8c4d4" strokeWidth="1.500" className="ml-auto mt-1 h-2.5 w-[42px]">
            <path d="M1 8.500h7M18 4h6v5h-6zM20 4V1.500h6V7h-2M35 1l6 8M41 1l-6 8" />
          </svg>
        </div>

        <div className="flex h-[46px] shrink-0 gap-px border-b border-[#6b717c]">
          <Bar w="w-[594px]">
            {slots("newdoc open save gear wrench lock gearGreen gearRed")}
            <Label w="w-[103px]">Load Toolbar State</Label>
            <Label w="w-[106px]">Save Toolbar State</Label>
          </Bar>
          <Bar w="w-[1311px]">
            {slots("headset wand1 wand2 wand3 wand4 drip swirl")}
            <Label w="w-[103px]" off>Remote Area Table</Label>
            {slots("gridRed plusPipe")}
            <Label w="w-[102px]">Analysis Reports...</Label>
            {slots("truss")}
            <Label w="w-[219px]" off>Keep Hydraulically Most Demanding Area</Label>
            <Label w="w-[56px]">Riser Tag</Label>
            <Label w="w-[103px]" off>Update Riser Tags</Label>
            {slots("tag3a tag3b")}
            <Label w="w-[71px]" off>Renumber...</Label>
            {slots("cleanup")}
            <Label w="w-[50px]" off>Cleanup</Label>
          </Bar>
        </div>
        <div className="flex h-[46px] shrink-0 border-b border-[#6b717c]">
          <Bar w="w-[1867px]">
            {slots("pipesDash pipeRed fitting plug cap coupling cross elbow flange hose")}
            <Label w="w-[96px]">Mechanical Cross</Label>
            <Label w="w-[88px]">Mechanical Tee</Label>
            {slots("outlet")}
            <Label w="w-[45px]">Saddle</Label>
            <Label w="w-[68px]">Seismic Flex</Label>
            {slots("tee union valveRed spool pump sprinkler sprinklerUp sidewall sphere")}
            <Label w="w-[113px]">Hydraulic Wormhole</Label>
            {slots("hydrant")}
            <Label w="w-[52px]">Strainer</Label>
            {slots("wallBulb axesRed hangerRed target")}
            <Label w="w-[105px]">Hanger Assembly...</Label>
            {slots("hangerGray axesGray")}
            <Label w="w-[78px]">Parts Profile...</Label>
          </Bar>
        </div>
        <div className="flex h-[46px] shrink-0 gap-px border-b border-[#6b717c]">
          <Bar w="w-[571px]">
            <Label w="w-[83px]" off>Create Detail...</Label>
            {slots("detailA detailB")}
            <Label w="w-[66px]" off>Hide Layers</Label>
            <Label w="w-[78px]" off>Isolate Layers</Label>
            <Label w="w-[91px]" off>Unisolate Layers</Label>
            <Label w="w-[132px]" off>Interference Checking...</Label>
          </Bar>
          <Bar w="w-[460px]">
            <Label w="w-[130px]">Hydraulic Calculations...</Label>
            {slots("graph")}
            <Slot n="book" on />
            {slots("table pageGray pageWhite")}
            <div className="w-8 shrink-0" />
            {slots("windowCyan")}
          </Bar>
          <Bar w="w-[385px]">
            {slots("beam")}
            <div className="w-[89px] shrink-0" />
            <Label w="w-[88px]">Elevate Beams...</Label>
            {slots("elev1 elev2 elev3")}
          </Bar>
          <Bar w="w-[435px]">
            {slots("beamRed balloon1 star")}
            <div className="w-11 shrink-0 text-center font-['Liberation_Mono',monospace] text-[17px] leading-[14px] text-black">
              ABC
              <br />
              ABC
            </div>
            {slots("letterA eraser lasso")}
            <Label w="w-[95px]">Sprinkler Legend</Label>
          </Bar>
        </div>

        <div className="flex h-[783px] shrink-0">
          <LayersPanel />
          <AlertsPanel />
          <SymbolsPanel />
          <SelectPanel />
          <div className="ml-1 w-[276px] shrink-0 bg-[#f4f4f4]" />
          <DocumentArea />
          <SideToolbars />
        </div>

        <div className="flex h-[19px] shrink-0 items-end border-t-8 border-[#3f414e] bg-[#2c2c2c] text-white">
          <div className="-mt-2 flex flex-1 items-center pl-1">For Help, press F1</div>
          <div className="-mt-2 flex items-center whitespace-nowrap pr-[47px] text-center tracking-[-0.4px]">
            <div className={SEP} />
            <span className="w-[67px]">268 selected</span>
            <div className={SEP} />
            <span className="w-[5px]" />
            <div className={SEP} />
            <span className="w-[55px]">Elev1: 0'-0</span>
            <div className={SEP} />
            <span className="w-[94px]">Thread and Weld</span>
            <div className={SEP} />
            <span className="w-[46px]">Text Box</span>
            <div className={SEP} />
            <span className="w-[33px]"># Off</span>
            <div className={SEP} />
            <span className="w-[28px]">Foot</span>
            <div className={SEP} />
          </div>
        </div>

        <div className="flex h-[46px] shrink-0 gap-px border-b border-[#3c3f45]">
          <Bar w="w-[618px]">
            <div className="-ml-px flex">{slots("windowFolder")}</div>
            <div className="flex gap-px">
              <div className={`${LIT} w-[38px]`}>Layers</div>
              <div className={`${LIT} w-[67px]`}>Parts Picker</div>
              <div className={`${LIT} w-[37px]`}>Alerts</div>
              <div className={`${LIT} w-[38px]`}>Select</div>
              <div className={`${LIT} w-[50px]`}>Symbols</div>
            </div>
            {slots("gLeft gUp gRight gDown gCcw gCw collapse")}
          </Bar>
          <Bar w="w-[184px]">
            <div className="-ml-[3px] flex">{slots("math")}</div>
            <div className="-ml-1 flex">{slots("goRight")}</div>
            <div className="ml-[7px] h-4 w-[61px] bg-white leading-4">
              <span className="bg-[#0078d7] text-white">80</span>
            </div>
          </Bar>
          <Bar w="w-[1089px]">
            {slots("undoLine squaresCursor checks burstCursor targetWin")}
            <div className={`${LIT} w-[87px]`}>Lock On Target</div>
            {slots("zoomUp zoomDown pUp pLeft pCcw pDown pRight pCw spinL spinR houseR houseFront houseL houseBack expand isoPlan")}
            <div className={`${LIT} w-11`}>
              <Icon n="plan" />
            </div>
          </Bar>
        </div>
        <div className="h-2 shrink-0 bg-linear-to-r from-[#15181f] via-[#241f17] to-[#2b2117]" />
      </div>
      <ListingDialog />
    </div>
  );
}
